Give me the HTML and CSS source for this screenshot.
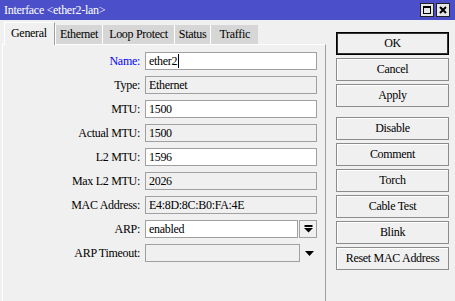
FILE: index.html
```html
<!DOCTYPE html>
<html lang="en">

<head>
    <meta charset="UTF-8">
    <title>Interface &lt;ether2-lan&gt;</title>
    <link rel="stylesheet" href="styles.css">
</head>

<body>
    <div class="window">
        <div class="titlebar">
            <span class="title">Interface &lt;ether2-lan&gt;</span>
            <div class="win-btns">
                <span class="win-btn">
                    <svg width="12" height="12" viewBox="0 0 12 12">
                        <rect x="2.5" y="2.5" width="7" height="7" fill="none" stroke="#000" stroke-width="1"/>
                        <rect x="2" y="2" width="8" height="2" fill="#000"/>
                    </svg>
                </span>
                <span class="win-btn">
                    <svg width="12" height="12" viewBox="0 0 12 12">
                        <path d="M3 3 L9 9 M9 3 L3 9" stroke="#000" stroke-width="2"/>
                    </svg>
                </span>
            </div>
        </div>

        <div class="main">
            <div class="left">
                <div class="tabs">
                    <div class="tab active">General</div>
                    <div class="tab">Ethernet</div>
                    <div class="tab tab-wide">Loop Protect</div>
                    <div class="tab">Status</div>
                    <div class="tab tab-last">Traffic</div>
                </div>
                <div class="panel">
                    <div class="row">
                        <label class="name-label">Name:</label>
                        <div class="field">ether2<span class="caret"></span></div>
                    </div>
                    <div class="row">
                        <label>Type:</label>
                        <div class="field readonly">Ethernet</div>
                    </div>
                    <div class="row">
                        <label>MTU:</label>
                        <div class="field">1500</div>
                    </div>
                    <div class="row">
                        <label>Actual MTU:</label>
                        <div class="field readonly">1500</div>
                    </div>
                    <div class="row">
                        <label>L2 MTU:</label>
                        <div class="field">1596</div>
                    </div>
                    <div class="row">
                        <label>Max L2 MTU:</label>
                        <div class="field readonly">2026</div>
                    </div>
                    <div class="row">
                        <label>MAC Address:</label>
                        <div class="field readonly">E4:8D:8C:B0:FA:4E</div>
                    </div>
                    <div class="row">
                        <label>ARP:</label>
                        <div class="field field-select">enabled</div>
                        <div class="drop-btn">
                            <svg width="9" height="8" viewBox="0 0 9 8">
                                <rect x="0.5" y="0" width="8" height="2" fill="#000"/>
                                <path d="M0 3 H9 L4.5 7.5 Z" fill="#000"/>
                            </svg>
                        </div>
                    </div>
                    <div class="row">
                        <label>ARP Timeout:</label>
                        <div class="field readonly field-timeout"></div>
                        <div class="expand-arrow">
                            <svg width="9" height="5" viewBox="0 0 9 5">
                                <path d="M0 0 H9 L4.5 5 Z" fill="#000"/>
                            </svg>
                        </div>
                    </div>
                </div>
            </div>

            <div class="actions">
                <button class="btn btn-default">OK</button>
                <button class="btn">Cancel</button>
                <button class="btn">Apply</button>
                <button class="btn group-start">Disable</button>
                <button class="btn">Comment</button>
                <button class="btn">Torch</button>
                <button class="btn">Cable Test</button>
                <button class="btn">Blink</button>
                <button class="btn">Reset MAC Address</button>
            </div>
        </div>
    </div>
</body>

</html>
```

FILE: styles.css
```css
* {
    box-sizing: border-box;
}

body {
    margin: 0;
    background-color: #f0f0f0;
    font-family: "Liberation Serif", serif;
    font-size: 12px;
    color: #000;
}

.window {
    display: flex;
    flex-direction: column;
    width: 455px;
    height: 301px;
    overflow: hidden;
}

.titlebar {
    display: flex;
    align-items: center;
    height: 20px;
    padding: 0 5px 0 4px;
    background-color: #4b4fc9;
    color: #fff;
}

.title {
    letter-spacing: -0.3px;
}

.win-btns {
    display: flex;
    gap: 2px;
    margin-left: auto;
}

.win-btn {
    display: flex;
    justify-content: center;
    align-items: center;
    width: 14px;
    height: 14px;
    border: 1px solid #222;
    background-color: #e6e6e6;
}

.main {
    display: flex;
    flex: 1;
}

.left {
    display: flex;
    flex-direction: column;
    width: 326px;
    padding: 2px 0 0 2px;
}

.tabs {
    display: flex;
    align-items: flex-end;
    height: 22px;
    padding-left: 2px;
}

.tab {
    height: 19px;
    line-height: 19px;
    padding: 0 4px;
    background-color: #d6d6d6;
    border-left: 1px solid #fff;
    letter-spacing: -0.3px;
}

.tab-wide {
    padding: 0 6px;
}

.tab-last {
    padding: 0 8px;
}

.tab.active {
    position: relative;
    height: 23px;
    line-height: 21px;
    margin-bottom: -1px;
    padding: 0 7px 0 6px;
    background-color: #f0f0f0;
    border-top: 1px solid #fff;
    border-right: 1px solid #a0a0a0;
}

.panel {
    flex: 1;
    padding-top: 7px;
    border-top: 1px solid #fff;
    border-left: 1px solid #fff;
    border-right: 1px solid #a0a0a0;
}

.row {
    display: flex;
    align-items: center;
    height: 18px;
    margin-bottom: 6px;
}

.row label {
    width: 137px;
    margin-right: 5px;
    text-align: right;
    letter-spacing: -0.3px;
}

.name-label {
    color: #0000ff;
}

.field {
    display: flex;
    align-items: center;
    width: 172px;
    height: 18px;
    padding: 0 3px;
    border: 1px solid #a0a0a0;
    background-color: #fff;
    letter-spacing: -0.3px;
}

.field.readonly {
    background-color: #f0f0f0;
}

.caret {
    width: 1px;
    height: 14px;
    margin-left: 1px;
    background-color: #000;
}

.field-select {
    width: 153px;
}

.drop-btn {
    display: flex;
    justify-content: center;
    align-items: center;
    width: 18px;
    height: 18px;
    margin-left: 1px;
    border: 1px solid #a0a0a0;
    background-color: #f0f0f0;
}

.field-timeout {
    width: 155px;
}

.expand-arrow {
    display: flex;
    margin-left: 5px;
}

.actions {
    display: flex;
    flex-direction: column;
    gap: 3px;
    padding: 12px 0 0 10px;
}

.btn {
    width: 113px;
    height: 23px;
    padding: 0;
    border: 1px solid #8c8c8c;
    background-color: #f0f0f0;
    box-shadow: inset 1px 1px 0 #fff;
    font-family: "Liberation Serif", serif;
    font-size: 12px;
    letter-spacing: -0.3px;
    color: #000;
}

.btn-default {
    border: 1px solid #000;
    box-shadow: inset 0 0 0 1px #333;
}

.group-start {
    margin-top: 7px;
}
```
